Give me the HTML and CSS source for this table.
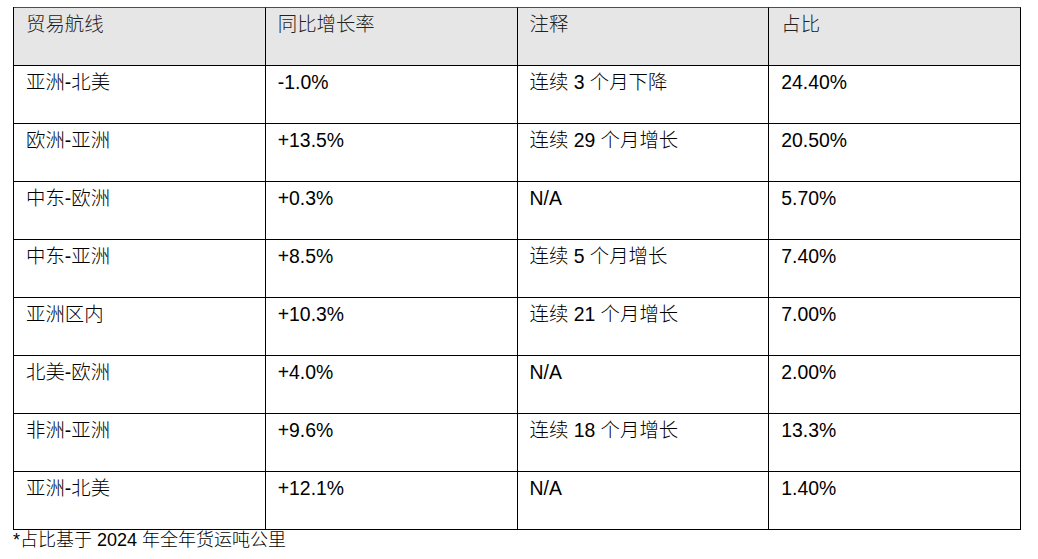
FILE: index.html
```html
<!DOCTYPE html>
<html lang="zh-CN">
<head>
<meta charset="utf-8">
<title>贸易航线</title>
<link rel="stylesheet" href="styles.css">
</head>
<body>
<main class="page">
  <table class="trade">
    <thead>
      <tr>
        <th>贸易航线</th>
        <th>同比增长率</th>
        <th>注释</th>
        <th>占比</th>
      </tr>
    </thead>
    <tbody>
      <tr><td>亚洲-北美</td><td>-1.0%</td><td>连续 3 个月下降</td><td>24.40%</td></tr>
      <tr><td>欧洲-亚洲</td><td>+13.5%</td><td>连续 29 个月增长</td><td>20.50%</td></tr>
      <tr><td>中东-欧洲</td><td>+0.3%</td><td>N/A</td><td>5.70%</td></tr>
      <tr><td>中东-亚洲</td><td>+8.5%</td><td>连续 5 个月增长</td><td>7.40%</td></tr>
      <tr><td>亚洲区内</td><td>+10.3%</td><td>连续 21 个月增长</td><td>7.00%</td></tr>
      <tr><td>北美-欧洲</td><td>+4.0%</td><td>N/A</td><td>2.00%</td></tr>
      <tr><td>非洲-亚洲</td><td>+9.6%</td><td>连续 18 个月增长</td><td>13.3%</td></tr>
      <tr><td>亚洲-北美</td><td>+12.1%</td><td>N/A</td><td>1.40%</td></tr>
    </tbody>
  </table>
  <p class="note">*占比基于 2024 年全年货运吨公里</p>
</main>
</body>
</html>
```

FILE: styles.css
```css
html, body {
  margin: 0;
  padding: 0;
  background: #ffffff;
}

.page {
  padding: 7px 0 0 13px;
  font-family: "Liberation Sans", Arial, "Noto Sans CJK SC", sans-serif;
  font-size: 19.4px;
  font-weight: 300;
  line-height: 22px;
  color: #000;
}

.trade {
  border-collapse: separate;
  border-spacing: 0;
  width: 1008px;
  table-layout: fixed;
  border-left: 1px solid #000;
}

.trade th,
.trade td {
  box-sizing: border-box;
  height: 58px;
  padding: 5px 12px 0 12px;
  text-align: left;
  vertical-align: top;
  font-weight: 300;
  border-right: 1px solid #000;
  border-bottom: 1px solid #000;
}

.trade th {
  background: #e7e6e6;
  border-top: 1px solid #2f45c8;
  height: 59px;
  padding-top: 5px;
  color: #222;
}

.note {
  margin: 0;
  font-size: 18px;
  line-height: 21px;
}
```
